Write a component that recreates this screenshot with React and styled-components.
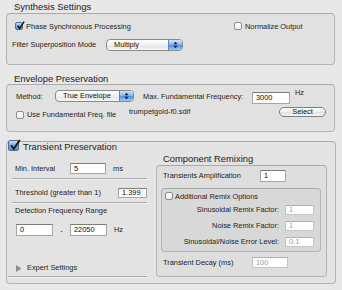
import React from "react";
import styled, { createGlobalStyle } from "styled-components";

const Global = createGlobalStyle`
  html, body {
    margin: 0;
    padding: 0;
    background: #e8e8e8;
  }
  body {
    font-family: "Liberation Sans", Arial, sans-serif;
    font-size: 7.4px;
    color: #1c1c1c;
  }
`;

const Window = styled.div`
  width: 342px;
  height: 290px;
  box-sizing: border-box;
  padding: 1px 6px 0 6px;
  overflow: hidden;
  display: flex;
  flex-direction: column;
`;

const Title = styled.div`
  height: 11px;
  line-height: 11px;
  font-size: 9.4px;
  color: #202020;
  padding-left: ${(p) => p.$indent ?? 8}px;
  margin-top: ${(p) => p.$top ?? 0}px;
  white-space: nowrap;
`;

const Group = styled.div`
  box-sizing: border-box;
  width: ${(p) => p.$w}px;
  height: ${(p) => p.$h}px;
  margin-top: ${(p) => p.$top ?? 0}px;
  margin-left: ${(p) => p.$ml ?? 0}px;
  padding-top: ${(p) => p.$pt ?? 0}px;
  border: 1px solid #b4b4b4;
  border-top-color: #a9a9a9;
  border-radius: 4px;
  background: ${(p) => p.$bg || "#e1e1e1"};
  display: flex;
  flex-direction: column;
`;

const Row = styled.div`
  display: flex;
  align-items: center;
  height: ${(p) => p.$h ?? 12}px;
  margin-top: ${(p) => p.$top ?? 0}px;
  padding-left: ${(p) => p.$pl ?? 0}px;
  white-space: nowrap;
`;

const CheckRow = styled.div`
  display: grid;
  grid-template-columns: ${(p) => p.$cols};
  align-items: center;
  height: ${(p) => p.$h ?? 10}px;
  margin-top: ${(p) => p.$top ?? 0}px;
  padding-left: ${(p) => p.$pl ?? 0}px;
`;

const Label = styled.span`
  display: inline-block;
  width: ${(p) => (p.$w ? p.$w + "px" : "auto")};
  flex-shrink: 0;
  margin-left: ${(p) => p.$ml ?? 0}px;
  margin-top: ${(p) => p.$mt ?? 0}px;
  padding-top: ${(p) => p.$pt ?? 0}px;
  align-self: ${(p) => p.$align || "auto"};
  line-height: 10px;
  white-space: nowrap;
`;

const CheckItem = styled.label`
  display: flex;
  align-items: center;
  gap: ${(p) => p.$gap ?? 3}px;
  white-space: nowrap;
  font-size: ${(p) => p.$fs ?? 7.4}px;
`;

const Box = styled.span`
  box-sizing: border-box;
  width: ${(p) => p.$size}px;
  height: ${(p) => p.$size}px;
  flex-shrink: 0;
  border: 1px solid ${(p) => (p.$checked ? "#4f6f96" : "#8f8f8f")};
  border-radius: 2px;
  background: ${(p) =>
    p.$checked
      ? "linear-gradient(#c6def7, #6ea7e3 55%, #4f8fd9)"
      : "linear-gradient(#ffffff, #ececec)"};
  display: inline-flex;
  position: relative;
`;

const CheckMark = styled.svg`
  position: absolute;
  left: 0;
  top: -2px;
`;

function Check({ checked, size = 8, children, gap, fs }) {
  return (
    <CheckItem $gap={gap} $fs={fs}>
      <Box $size={size} $checked={checked}>
        {checked && (
          <CheckMark width={size + 1} height={size + 1} viewBox="0 0 10 10">
            <path d="M1.8 5.2 L4 8.2 L9 0.8" fill="none" stroke="#151515" strokeWidth="1.6" />
          </CheckMark>
        )}
      </Box>
      <span>{children}</span>
    </CheckItem>
  );
}

const PopUpFrame = styled.div`
  box-sizing: border-box;
  width: ${(p) => p.$w}px;
  height: ${(p) => p.$h ?? 12}px;
  flex-shrink: 0;
  align-self: ${(p) => p.$align || "auto"};
  border: 1px solid #8b8b8b;
  border-radius: 4px;
  background: linear-gradient(#ffffff, #efefef 55%, #e4e4e4 56%, #f7f7f7);
  display: flex;
  align-items: stretch;
  overflow: hidden;
`;

const PopText = styled.span`
  flex: 1;
  padding-left: 7px;
  line-height: ${(p) => p.$lh}px;
  color: #111;
  white-space: nowrap;
`;

const Stepper = styled.span`
  width: 13px;
  border-left: 1px solid #5d86bd;
  background: linear-gradient(#cfe4fb, #7db3ee 50%, #4a8ee6 51%, #9ccaf7);
  display: flex;
  align-items: center;
  justify-content: center;
`;

function PopUp({ w, h = 12, align, children }) {
  return (
    <PopUpFrame $w={w} $h={h} $align={align}>
      <PopText $lh={h - 2}>{children}</PopText>
      <Stepper>
        <svg width="5" height="8" viewBox="0 0 5 8">
          <polygon points="0.5,3.3 2.5,0.8 4.5,3.3" fill="#1a1a1a" />
          <polygon points="0.5,4.7 2.5,7.2 4.5,4.7" fill="#1a1a1a" />
        </svg>
      </Stepper>
    </PopUpFrame>
  );
}

const Field = styled.div`
  box-sizing: border-box;
  width: ${(p) => p.$w}px;
  height: ${(p) => p.$h ?? 11}px;
  flex-shrink: 0;
  margin-left: ${(p) => p.$ml ?? 0}px;
  align-self: ${(p) => p.$align || "auto"};
  background: #fff;
  border: 1px solid ${(p) => (p.$disabled ? "#c4c4c4" : "#a6a6a6")};
  border-top-color: ${(p) => (p.$disabled ? "#b0b0b0" : "#7c7c7c")};
  padding-left: 3px;
  line-height: ${(p) => (p.$h ?? 11) - 2}px;
  color: ${(p) => (p.$disabled ? "#9b9b9b" : "#0a0a0a")};
  white-space: nowrap;
`;

const PushButton = styled.div`
  box-sizing: border-box;
  width: ${(p) => p.$w}px;
  height: 10px;
  margin-left: auto;
  margin-right: ${(p) => p.$mr ?? 0}px;
  align-self: flex-start;
  border: 1px solid #7d7d7d;
  border-radius: 5px;
  background: linear-gradient(#ffffff, #f0f0f0 50%, #e0e0e0 51%, #f8f8f8);
  text-align: center;
  line-height: 8px;
  color: #111;
`;

const Separator = styled.div`
  height: 0;
  margin-top: ${(p) => p.$top ?? 0}px;
  margin-left: ${(p) => p.$ml ?? 0}px;
  border-top: 1px solid #a9a9a9;
  border-bottom: 1px solid #f4f4f4;
`;

const TransientBox = styled.div`
  box-sizing: border-box;
  width: 330px;
  height: 143px;
  margin-top: 9px;
  border: 1px solid #b4b4b4;
  border-top-color: #a9a9a9;
  border-radius: 4px;
  background: #e3e3e3;
`;

const TransientHeader = styled.div`
  display: flex;
  align-items: center;
  height: 12px;
  margin-top: -3px;
  padding-left: 1px;
  span:last-child {
    margin-top: 3px;
  }
`;

const Columns = styled.div`
  display: grid;
  grid-template-columns: 139px 171px;
  column-gap: 9px;
  padding-left: 1px;
`;

const Column = styled.div`
  display: flex;
  flex-direction: column;
`;

const Dash = styled.span`
  width: 17px;
  text-align: center;
`;

const Disclosure = styled.svg`
  margin-right: 5px;
  flex-shrink: 0;
`;

const RemixGrid = styled.div`
  display: grid;
  grid-template-columns: 1fr 29px;
  grid-auto-rows: 10px;
  row-gap: 6px;
  column-gap: 6px;
  align-items: center;
  margin-top: 4px;
  padding-right: 6px;
  white-space: nowrap;
  span {
    text-align: right;
    line-height: 10px;
  }
`;

export default function App() {
  return (
    <>
      <Global />
      <Window>
        <Title>Synthesis Settings</Title>
        <Group $w={329} $h={52} $top={1} $pt={7}>
          <CheckRow $cols="219px auto" $pl={8}>
            <Check checked>Phase Synchronous Processing</Check>
            <Check>Normalize Output</Check>
          </CheckRow>
          <Row $top={8} $pl={5}>
            <Label $w={94}>Filter Superposition Mode</Label>
            <PopUp w={77}>Multiply</PopUp>
          </Row>
        </Group>

        <Title $top={8}>Envelope Preservation</Title>
        <Group $w={329} $h={48} $pt={5}>
          <Row $h={14} $pl={9}>
            <Label $w={39}>Method:</Label>
            <PopUp w={79} h={12} align="flex-start">True Envelope</PopUp>
            <Label $ml={9} $w={109}>Max. Fundamental Frequency:</Label>
            <Field $w={38} $h={12} $align="flex-end">3000</Field>
            <Label $ml={5} $mt={-2} $align="flex-start">Hz</Label>
          </Row>
          <Row $h={12} $top={3} $pl={9}>
            <Label $w={113} $pt={4}>
              <Check>Use Fundamental Freq. file</Check>
            </Label>
            <Label $align="flex-start">trumpetgold-f0.sdif</Label>
            <PushButton $w={47} $mr={8}>Select</PushButton>
          </Row>
        </Group>

        <TransientBox>
          <TransientHeader>
            <Check checked size={11} gap={4} fs={9.4}>Transient Preservation</Check>
          </TransientHeader>
          <Columns>
            <Column>
              <Row $top={12} $h={11} $pl={7}>
                <Label $w={55}>Min. Interval</Label>
                <Field $w={36}>5</Field>
                <Label $ml={7}>ms</Label>
              </Row>
              <Separator $top={4} $ml={4} />
              <Row $top={7} $h={11} $pl={7}>
                <Label $w={103}>Threshold (greater than 1)</Label>
                <Field $w={29} $h={10}>1.399</Field>
              </Row>
              <Separator $top={4} $ml={4} />
              <Row $top={2} $h={10} $pl={7}>
                <Label>Detection Frequency Range</Label>
              </Row>
              <Row $top={8} $h={12} $pl={8}>
                <Field $w={37} $h={12}>0</Field>
                <Dash>-</Dash>
                <Field $w={37} $h={12}>22050</Field>
                <Label $ml={7}>Hz</Label>
              </Row>
              <Row $top={27} $h={10} $pl={8}>
                <Disclosure width="6" height="7" viewBox="0 0 6 7">
                  <polygon points="0,0 5.5,3.5 0,7" fill="#8c8c8c" />
                </Disclosure>
                <Label>Expert Settings</Label>
              </Row>
              <Separator $top={3} />
            </Column>

            <Column>
              <Title $top={2} $indent={7}>Component Remixing</Title>
              <Group $w={171} $h={112} $top={1} $pt={4} $bg="#dedede">
                <Row $h={12} $pl={6}>
                  <Label $w={97}>Transients Amplification</Label>
                  <Field $w={26} $h={12}>1</Field>
                </Row>
                <Group $w={160} $h={64} $top={6} $ml={4} $pt={2} $bg="#d8d8d8">
                  <Row $h={10} $pl={3}>
                    <Check gap={2}>Additional Remix Options</Check>
                  </Row>
                  <RemixGrid>
                    <span>Sinusoidal Remix Factor:</span>
                    <Field $w={29} $h={10} $disabled>1</Field>
                    <span>Noise Remix Factor:</span>
                    <Field $w={29} $h={10} $disabled>1</Field>
                    <span>Sinusoidal/Noise Error Level:</span>
                    <Field $w={29} $h={10} $disabled>0.1</Field>
                  </RemixGrid>
                </Group>
                <Row $h={11} $top={5} $pl={6}>
                  <Label $w={89}>Transient Decay (ms)</Label>
                  <Field $w={36} $disabled>100</Field>
                </Row>
              </Group>
            </Column>
          </Columns>
        </TransientBox>
      </Window>
    </>
  );
}
